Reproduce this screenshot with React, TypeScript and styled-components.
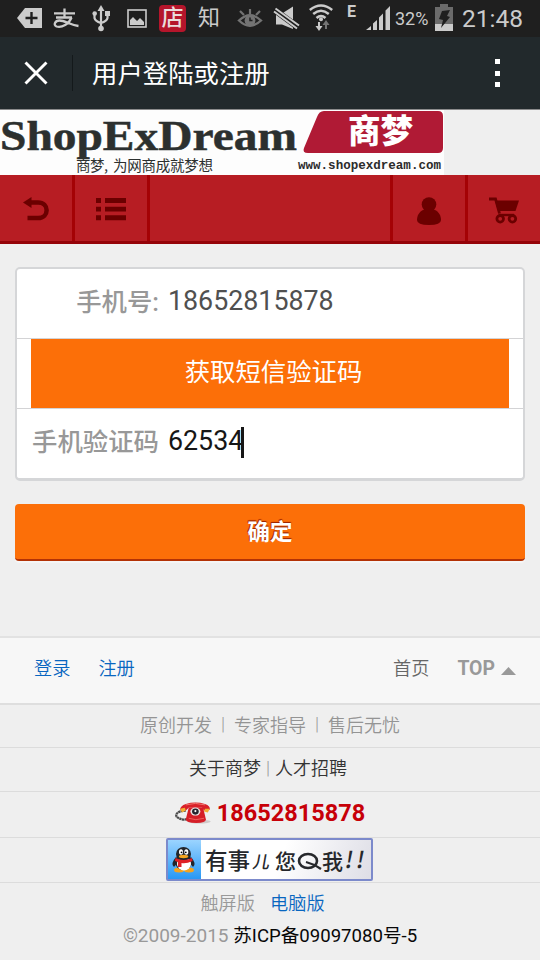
import React from "react";
import styled, { createGlobalStyle } from "styled-components";

const sans = `Roboto, "Noto Sans CJK SC", sans-serif`;

const GlobalStyle = createGlobalStyle`
  *, *::before, *::after { box-sizing: border-box; }
  body { margin: 0; background: #efefef; font-family: ${sans}; }
  svg { display: block; flex: none; overflow: visible; }
`;

const Page = styled.div`
  width: 540px;
  height: 960px;
  overflow: hidden;
  display: flex;
  flex-direction: column;
  background: #efefef;
`;

/* ---------- system status bar ---------- */

const StatusBar = styled.div`
  height: 37px;
  flex: none;
  display: flex;
  align-items: flex-start;
  background: #1f1f1f;
  color: #cbcbcb;
`;

const StatusItem = styled.div<{ $width: number; $before: number }>`
  flex: none;
  width: ${(p) => p.$width}px;
  margin-left: ${(p) => p.$before}px;
  height: 37px;
`;

const StatusText = styled(StatusItem)<{ $size: number; $weight?: number; $line?: number }>`
  font-size: ${(p) => p.$size}px;
  font-weight: ${(p) => p.$weight ?? 400};
  line-height: ${(p) => p.$line ?? 37}px;
  white-space: nowrap;
`;

const StoreBadge = styled.div`
  width: 27px;
  height: 27px;
  margin: 5px 0 0 12px;
  flex: none;
  border-radius: 4px;
  background: #b5152b;
  color: #e9dcdc;
  font-size: 22px;
  font-weight: 500;
  line-height: 26px;
  text-align: center;
`;

/* ---------- title bar ---------- */

const TitleBar = styled.header`
  height: 73px;
  flex: none;
  display: flex;
  align-items: center;
  background: #22292c;
  border-bottom: 1px solid #8b8b8c;
  padding: 0 40px 0 24px;
`;

const TitleRule = styled.div`
  width: 1px;
  height: 36px;
  margin: 0 19px 0 24px;
  background: #14191b;
`;

const Title = styled.h1`
  margin: 0;
  padding-top: 2px;
  flex: 1;
  color: #fff;
  font-size: 25.4px;
  font-weight: 400;
  line-height: 36px;
`;

const MoreDots = styled.div`
  display: flex;
  flex-direction: column;
  gap: 6.5px;
`;

const Dot = styled.i`
  width: 5px;
  height: 5px;
  background: #fff;
`;

/* ---------- brand banner ---------- */

const Banner = styled.div`
  height: 65px;
  flex: none;
  width: 444px;
  background: #fdfdfd;
  display: flex;
`;

const BrandLeft = styled.div`
  width: 297px;
  white-space: nowrap;
`;

const BrandRight = styled.div`
  width: 147px;
`;

const BrandMark = styled.svg`
  width: 147px;
  height: 44px;
`;

/* ---------- navigation ---------- */

const Nav = styled.nav`
  height: 69px;
  flex: none;
  display: flex;
  justify-content: space-between;
  background: #b71d23;
  border-bottom: 3px solid #950309;
`;

const NavGroup = styled.div`
  display: flex;
`;

const NavButton = styled.div<{ $edge: "left" | "right"; $drop?: number }>`
  width: 75px;
  padding-top: ${(p) => p.$drop ?? 2}px;
  padding-right: 1px;
  display: flex;
  align-items: center;
  justify-content: center;
  border-${(p) => p.$edge}: 3px solid #a40205;
`;

/* ---------- form ---------- */

const Form = styled.main`
  height: 392px;
  flex: none;
  padding: 23px 15px 0;
`;

const Card = styled.section`
  height: 214px;
  border: 2px solid #d5d6d8;
  border-bottom-width: 3px;
  border-radius: 5px;
  background: #fff;
`;

const FieldRow = styled.div<{ $height: number; $divider?: boolean }>`
  height: ${(p) => p.$height}px;
  display: flex;
  padding: 0 14px;
  border-bottom: ${(p) => (p.$divider ? "1px solid #d3d3d5" : "0")};
`;

const Label = styled.label`
  width: 128px;
  flex: none;
  text-align: right;
  color: #989898;
  font-size: 25.4px;
  font-weight: 500;
  line-height: 67px;
  white-space: nowrap;
`;

const Value = styled.div<{ $color: string }>`
  margin-left: 9px;
  color: ${(p) => p.$color};
  font-size: 26.8px;
  line-height: 65px;
`;

const Caret = styled.i`
  width: 3px;
  height: 31px;
  margin: 18px 0 0 -2px;
  background: #161616;
`;

const CodeButton = styled.div`
  flex: 1;
  padding-left: 7px;
  background: #fc6f08;
  color: #fff;
  font-size: 25.4px;
  font-weight: 400;
  line-height: 66px;
  text-align: center;
`;

const Submit = styled.div`
  height: 57px;
  margin-top: 23px;
  border-radius: 4px;
  background: #fc6f08;
  border-bottom: 2px solid #b33206;
  box-shadow: 0 2px 1px #f6f6f6;
  color: #fff;
  font-size: 22.5px;
  font-weight: 700;
  line-height: 57px;
  text-align: center;
  text-shadow: 0 -1px 1px #9c2400, -1px -1px 0 #b53a05;
`;

/* ---------- footer ---------- */

const FooterBar = styled.div`
  height: 69px;
  flex: none;
  display: flex;
  justify-content: space-between;
  padding: 0 24px 0 34px;
  background: #f7f7f7;
  border-top: 2px solid #e2e2e2;
  border-bottom: 2px solid #dedede;
`;

const FooterGroup = styled.div`
  display: flex;
  align-items: center;
  gap: 28px;
  height: 58px;
`;

const FooterLink = styled.a<{ $color: string }>`
  color: ${(p) => p.$color};
  font-size: 18.2px;
  font-weight: 350;
`;

const TopLink = styled.a`
  display: flex;
  align-items: center;
  padding-top: 2px;
  color: #999;
  font-size: 19.4px;
  font-weight: 700;
`;

const UpTriangle = styled.svg`
  width: 15px;
  height: 8px;
  margin: 5px 0 0 6px;
`;

const FooterRow = styled.div<{ $height: number; $color?: string; $lift?: number; $left?: number }>`
  height: ${(p) => p.$height}px;
  flex: none;
  display: flex;
  align-items: center;
  justify-content: center;
  padding: 0 ${(p) => p.$left ?? 0}px ${(p) => p.$lift ?? 0}px 0;
  border-bottom: 1px solid #dcdcdc;
  color: ${(p) => p.$color ?? "#949494"};
  font-size: 18px;
  font-weight: 350;
  white-space: pre;
`;

const Separator = styled.span<{ $space: number }>`
  color: #999;
  margin: 0 ${(p) => p.$space}px;
`;

const Phone = styled.span`
  margin-left: 6px;
  color: #c70008;
  font-size: 23.5px;
  font-weight: 700;
`;

const QQBadge = styled.div`
  width: 207px;
  height: 43px;
  display: flex;
  flex: none;
  border: 2px solid #7c8acb;
  border-radius: 2px;
  background: linear-gradient(110deg, #fff 55%, #dedee6);
`;

const Version = styled.div`
  height: 38px;
  flex: none;
  display: flex;
  justify-content: center;
  gap: 15px;
  margin-left: -15px;
  line-height: 42px;
  color: #999;
  font-size: 18.2px;
  font-weight: 350;
`;

const Accent = styled.a`
  color: #0866c0;
`;

const Copyright = styled.div`
  height: 28px;
  flex: none;
  text-align: center;
  line-height: 29px;
  color: #999;
  font-size: 19px;
  white-space: nowrap;
`;

const Registration = styled.span`
  color: #080808;
  font-size: 18.6px;
`;

/* ---------- drawings ---------- */

const BackPlusIcon = () => (
  <svg width="25" height="37" viewBox="0 0 25 37">
    <path d="M8 8H25V28H8L0 18Z" fill="#cbcbcb" />
    <path d="M14.5 12V24M8.5 18H20.5" stroke="#1f1f1f" strokeWidth="2.4" />
  </svg>
);

/* Calligraphic payment mark: the lower strokes loop left and sweep right. */
const PayIcon = () => (
  <svg width="27" height="37" viewBox="0 0 27 37" fill="none" stroke="#cbcbcb" strokeWidth="2.3">
    <path d="M1 13.3H22M11.5 8.5V17M3 17.5H19" />
    <path d="M18.5 17.5C16 24 9 28 3.5 26.5C0 25 2 20.5 6.500 20.500C12 20.500 17 25 25.500 26" />
  </svg>
);

const UsbIcon = () => (
  <svg width="18" height="37" viewBox="0 0 18 37" fill="none" stroke="#cbcbcb" strokeWidth="2.2">
    <path d="M9 10V28M2.500 12V18Q3 21 9 23Q15 21 15.500 18V12" />
    <path d="M9 5L12.500 11H5.500Z" fill="#cbcbcb" stroke="none" />
    <circle cx="9" cy="28.500" r="2.800" fill="#cbcbcb" stroke="none" />
    <circle cx="2.700" cy="13.500" r="2.300" fill="#cbcbcb" stroke="none" />
    <path d="M13 11H18V16H13Z" fill="#cbcbcb" stroke="none" />
  </svg>
);

const PictureIcon = () => (
  <svg width="20" height="37" viewBox="0 0 20 37">
    <rect x="1" y="10" width="18" height="17" fill="none" stroke="#cbcbcb" strokeWidth="1.6" />
    <path d="M3 25V20L6 17L9 20L10 21L13 18L17 22V25Z" fill="#cbcbcb" />
  </svg>
);

const EyeIcon = () => (
  <svg width="24" height="37" viewBox="0 0 24 37" fill="none" stroke="#737373">
    <path d="M1 20.5Q12 10 23 20.5Q12 31 1 20.5Z" strokeWidth="2.4" />
    <circle cx="12" cy="20.5" r="5.4" fill="#737373" stroke="none" />
    <path d="M12 17.500V20.500H14.500" stroke="#1f1f1f" strokeWidth="1.500" />
    <path d="M2 11L6 15M12 9V14M22 11L18 15" strokeWidth="2.2" />
  </svg>
);

const MuteIcon = () => (
  <svg width="26" height="37" viewBox="0 0 26 37">
    <path d="M2 13.500H8L19 6.500V29L8 24.500H2Z" fill="#cbcbcb" />
    <path d="M0 9.500L25 28" stroke="#1f1f1f" strokeWidth="6.500" />
    <path d="M1.500 8.500L25 25.500M0 11.500L23 28.500" stroke="#cbcbcb" strokeWidth="2" />
  </svg>
);

const WifiIcon = () => (
  <svg width="24" height="37" viewBox="0 0 24 37" fill="none">
    <path d="M.8 10Q12 1 23.2 10M4.2 14Q12 7.5 19.8 14M7.5 18Q12 14 16.5 18" stroke="#cbcbcb" strokeWidth="2.5" />
    <circle cx="12" cy="19.3" r="2" fill="#cbcbcb" />
    <path d="M10 22V28" stroke="#cbcbcb" strokeWidth="2" />
    <path d="M6.5 26H13.5L10 31Z" fill="#cbcbcb" />
    <path d="M17 29V23" stroke="#737373" strokeWidth="2" />
    <path d="M13.5 25L17 20L20.5 25Z" fill="#737373" />
  </svg>
);

const SignalIcon = () => (
  <svg width="24" height="37" viewBox="0 0 24 37" fill="#cbcbcb">
    <path d="M0 30L5 26V30ZM7 30V23.5L11 20V30ZM13 30V17.5L17 13.5V30ZM19.5 30V10.5L24 6V30Z" />
  </svg>
);

const BatteryIcon = () => (
  <svg width="18" height="37" viewBox="0 0 18 37">
    <path d="M5 4H13V7H18V31H0V7H5Z" fill="#6b6b6b" />
    <path d="M0 24H18V31H0Z" fill="#cbcbcb" />
    <path d="M7 11L15 10L12 16L15 17L6 28L8 20L4 19Z" fill="#1f1f1f" />
  </svg>
);

const CloseIcon = () => (
  <svg width="24" height="24" viewBox="0 0 24 24">
    <path d="M1.5 1.5L22.5 22.5M22.5 1.5L1.5 22.5" stroke="#fff" strokeWidth="2.9" />
  </svg>
);

const ReturnIcon = () => (
  <svg width="26" height="24" viewBox="0 0 26 24">
    <path d="M6 5.5H15C26.500 5.5 26.500 21 15 21H4.5" fill="none" stroke="#6b0000" strokeWidth="4.500" />
    <path d="M0 5.5L8.5 0V11Z" fill="#6b0000" />
  </svg>
);

const ListIcon = () => (
  <svg width="30" height="23" viewBox="0 0 30 23" fill="#6b0000">
    <path d="M0 0H5V5H0ZM9 0H30V5H9ZM0 8.7H5V13.5H0ZM9 8.7H30V13.5H9ZM0 17.2H5V22.2H0ZM9 17.2H30V22.2H9Z" />
  </svg>
);

const PersonIcon = () => (
  <svg width="24" height="28" viewBox="0 0 24 28" fill="#6b0000">
    <circle cx="12" cy="7.5" r="7.3" />
    <path d="M6 13H18C22 15 24 19 24 23Q24 28 12 28Q0 28 0 23C0 19 2 15 6 13Z" />
  </svg>
);

const CartIcon = () => (
  <svg width="30" height="27" viewBox="0 0 30 27" fill="none" stroke="#6b0000">
    <path d="M6 3.5H30L26.5 14H9Z" fill="#6b0000" stroke="none" />
    <path d="M0 2H6.5L10.5 16.5" strokeWidth="2.8" />
    <circle cx="11.2" cy="21.8" r="3.3" strokeWidth="2.8" />
    <circle cx="23.4" cy="21.8" r="3.3" strokeWidth="2.8" />
    <path d="M10 18H25" strokeWidth="2.4" />
  </svg>
);

const TelephoneIcon = () => (
  <svg width="36" height="22" viewBox="0 0 37 23">
    <ellipse cx="25" cy="20.5" rx="12" ry="2" fill="#cfcaca" />
    <path d="M11 9C1 9 -2 15 4 17Q8 19 12 18" fill="none" stroke="#4b4b4b" strokeWidth="2.4" strokeDasharray="2.4 .4" />
    <path d="M14 6H29L32 18Q32 22 22 22Q11 22 11 18Z" fill="#d51e27" />
    <path d="M5 8Q5 4 11 2Q21 -1 31 2Q37 4 36 8L30 9L28 6H14L11 9Z" fill="#d92029" />
    <path d="M5 7L10 6L11 9L7 11ZM31 7L36 7L34 11L30 10Z" fill="#f2ae32" />
    <path d="M11 3Q21 0 31 3" fill="none" stroke="#f17870" />
    <ellipse cx="21" cy="10" rx="5.2" ry="4.2" fill="#e9e4e4" />
    <ellipse cx="21" cy="10" rx="3.5" ry="3.2" fill="#26232d" />
    <circle cx="21" cy="9.5" r="1.1" fill="#fff" />
    <path d="M14 17Q21 20 30 17" fill="none" stroke="#ef625d" />
  </svg>
);

const PenguinIcon = () => (
  <svg width="33" height="39" viewBox="0 0 33 39">
    <defs>
      <linearGradient id="sky" x1="0" y1="0" x2="0" y2="1">
        <stop offset="0" stopColor="#9bd4ff" />
        <stop offset="1" stopColor="#2898f5" />
      </linearGradient>
    </defs>
    <rect width="33" height="39" fill="url(#sky)" />
    <g transform="translate(0 -1)">
      <ellipse cx="11" cy="31" rx="5" ry="2.5" fill="#f5a31d" />
      <ellipse cx="21" cy="31" rx="5" ry="2.5" fill="#f5a31d" />
      <path d="M8 18Q2 25 6 28L11 22ZM23 18Q29 25 25 28L20 22Z" fill="#22252b" />
      <ellipse cx="15.5" cy="23" rx="8.5" ry="8" fill="#22252b" />
      <ellipse cx="16" cy="25" rx="7" ry="6.5" fill="#fff" />
      <ellipse cx="15.5" cy="15" rx="7.5" ry="7" fill="#22252b" />
      <ellipse cx="13" cy="13" rx="2" ry="2.8" fill="#fff" />
      <ellipse cx="18.3" cy="13" rx="2" ry="2.8" fill="#fff" />
      <circle cx="13.5" cy="13.3" r=".9" />
      <circle cx="17.8" cy="13.3" r=".9" />
      <ellipse cx="15.6" cy="17.5" rx="4.7" ry="1.7" fill="#f4a51f" />
      <path d="M7.5 19Q15.5 23 24 19L24.5 22Q18 25 13.5 24V28H10V23L7 22Z" fill="#df2026" />
    </g>
  </svg>
);

/* Slanted hand-lettered slogan inside the chat badge. */
const SloganDrawing = styled.svg`
  width: 170px;
  height: 39px;
  font-family: "Noto Sans CJK SC", sans-serif;
  font-weight: 500;
`;

const Slogan = () => (
  <SloganDrawing viewBox="0 0 170 39" fill="#26282c">
    <text x="4" y="29" fontSize="22.5">有事</text>
    <text x="52" y="28" fontSize="17" transform="skewX(-10)" dx="4">儿</text>
    <text x="74" y="29" fontSize="21">您</text>
    <text x="121" y="28.5" fontSize="21">我</text>
    <ellipse cx="107" cy="21" rx="9" ry="7" fill="none" stroke="#26282c" strokeWidth="2.6" />
    <path d="M105 22Q113 24 120 29" fill="none" stroke="#26282c" strokeWidth="2.3" />
    <text x="145" y="28" fontSize="23" textLength="19" transform="skewX(-10)" dx="3">!!</text>
  </SloganDrawing>
);

const WordMark = () => (
  <svg width="297" height="65" viewBox="0 0 297 65" fill="#2c302f">
    <text x="0" y="40" fontFamily='"Liberation Serif", serif' fontWeight="700" fontSize="43" stroke="#2c302f" strokeWidth=".5" textLength="297" lengthAdjust="spacingAndGlyphs">
      ShopExDream
    </text>
    <text x="76" y="61" fontFamily='"Noto Sans CJK SC", sans-serif' fontSize="14.5" textLength="32">商梦,</text>
    <text x="113" y="61" fontFamily='"Noto Sans CJK SC", sans-serif' fontSize="14.5" textLength="100">为网商成就梦想</text>
  </svg>
);

export default function App() {
  return (
    <>
      <GlobalStyle />
      <Page>
        <StatusBar>
          <StatusItem $width={25} $before={17}><BackPlusIcon /></StatusItem>
          <StatusItem $width={27} $before={11} role="img" aria-label="支"><PayIcon /></StatusItem>
          <StatusItem $width={18} $before={12}><UsbIcon /></StatusItem>
          <StatusItem $width={20} $before={17}><PictureIcon /></StatusItem>
          <StoreBadge>店</StoreBadge>
          <StatusText $width={22} $before={12} $size={22} $line={36}>知</StatusText>
          <StatusItem $width={24} $before={18}><EyeIcon /></StatusItem>
          <StatusItem $width={26} $before={12}><MuteIcon /></StatusItem>
          <StatusItem $width={24} $before={9}><WifiIcon /></StatusItem>
          <StatusText $width={10} $before={14} $size={16} $weight={700} $line={24}>E</StatusText>
          <StatusItem $width={24} $before={9}><SignalIcon /></StatusItem>
          <StatusText $width={36} $before={5} $size={18} $line={38}>32%</StatusText>
          <StatusItem $width={18} $before={4}><BatteryIcon /></StatusItem>
          <StatusText $width={64} $before={9} $size={24.5} $line={37}>21:48</StatusText>
        </StatusBar>

        <TitleBar>
          <CloseIcon />
          <TitleRule />
          <Title>用户登陆或注册</Title>
          <MoreDots><Dot /><Dot /><Dot /></MoreDots>
        </TitleBar>

        <Banner>
          <BrandLeft><WordMark /></BrandLeft>
          <BrandRight>
            <BrandMark viewBox="0 0 147 44">
              <path d="M27 1H141Q146 1 146 6V38Q146 43 141 43H11Q5 43 7 38L20 7Q22 1 27 1Z" fill="#b01a35" />
              <text x="51" y="33" fill="#fff" fontFamily='"Noto Sans CJK SC", sans-serif' fontWeight="900" fontSize="32.5">商梦</text>
            </BrandMark>
            <svg width="147" height="21" viewBox="0 0 147 21">
              <text x="1" y="15" fill="#2b2b2b" fontFamily='"Liberation Mono", monospace' fontWeight="700" fontSize="12.5" textLength="143" lengthAdjust="spacingAndGlyphs">
                www.shopexdream.com
              </text>
            </svg>
          </BrandRight>
        </Banner>

        <Nav>
          <NavGroup>
            <NavButton $edge="right"><ReturnIcon /></NavButton>
            <NavButton $edge="right"><ListIcon /></NavButton>
          </NavGroup>
          <NavGroup>
            <NavButton $edge="left" $drop={5}><PersonIcon /></NavButton>
            <NavButton $edge="left" $drop={4}><CartIcon /></NavButton>
          </NavGroup>
        </Nav>

        <Form>
          <Card>
            <FieldRow $height={70} $divider>
              <Label>手机号:</Label>
              <Value $color="#505050">18652815878</Value>
            </FieldRow>
            <FieldRow $height={70} $divider>
              <CodeButton>获取短信验证码</CodeButton>
            </FieldRow>
            <FieldRow $height={69}>
              <Label>手机验证码</Label>
              <Value $color="#161616">62534</Value>
              <Caret />
            </FieldRow>
          </Card>
          <Submit>确定</Submit>
        </Form>

        <FooterBar>
          <FooterGroup>
            <FooterLink $color="#0866c0">登录</FooterLink>
            <FooterLink $color="#0866c0">注册</FooterLink>
          </FooterGroup>
          <FooterGroup>
            <FooterLink $color="#666">首页</FooterLink>
            <TopLink>
              TOP
              <UpTriangle viewBox="0 0 15 8"><path d="M7.5 0L15 8H0Z" fill="#999" /></UpTriangle>
            </TopLink>
          </FooterGroup>
        </FooterBar>

        <FooterRow $height={43} $lift={5}>
          原创开发<Separator $space={9}>|</Separator>专家指导<Separator $space={9}>|</Separator>售后无忧
        </FooterRow>
        <FooterRow $height={44} $color="#333" $lift={5} $left={4}>
          关于商梦<Separator $space={5}>|</Separator>人才招聘
        </FooterRow>
        <FooterRow $height={46} $lift={4}>
          <TelephoneIcon />
          <Phone>18652815878</Phone>
        </FooterRow>
        <FooterRow $height={45} $lift={2} $left={2}>
          <QQBadge>
            <PenguinIcon />
            <Slogan />
          </QQBadge>
        </FooterRow>
        <Version>
          <span>触屏版</span>
          <Accent>电脑版</Accent>
        </Version>
        <Copyright>
          ©2009-2015 <Registration>苏ICP备09097080号-5</Registration>
        </Copyright>
      </Page>
    </>
  );
}
